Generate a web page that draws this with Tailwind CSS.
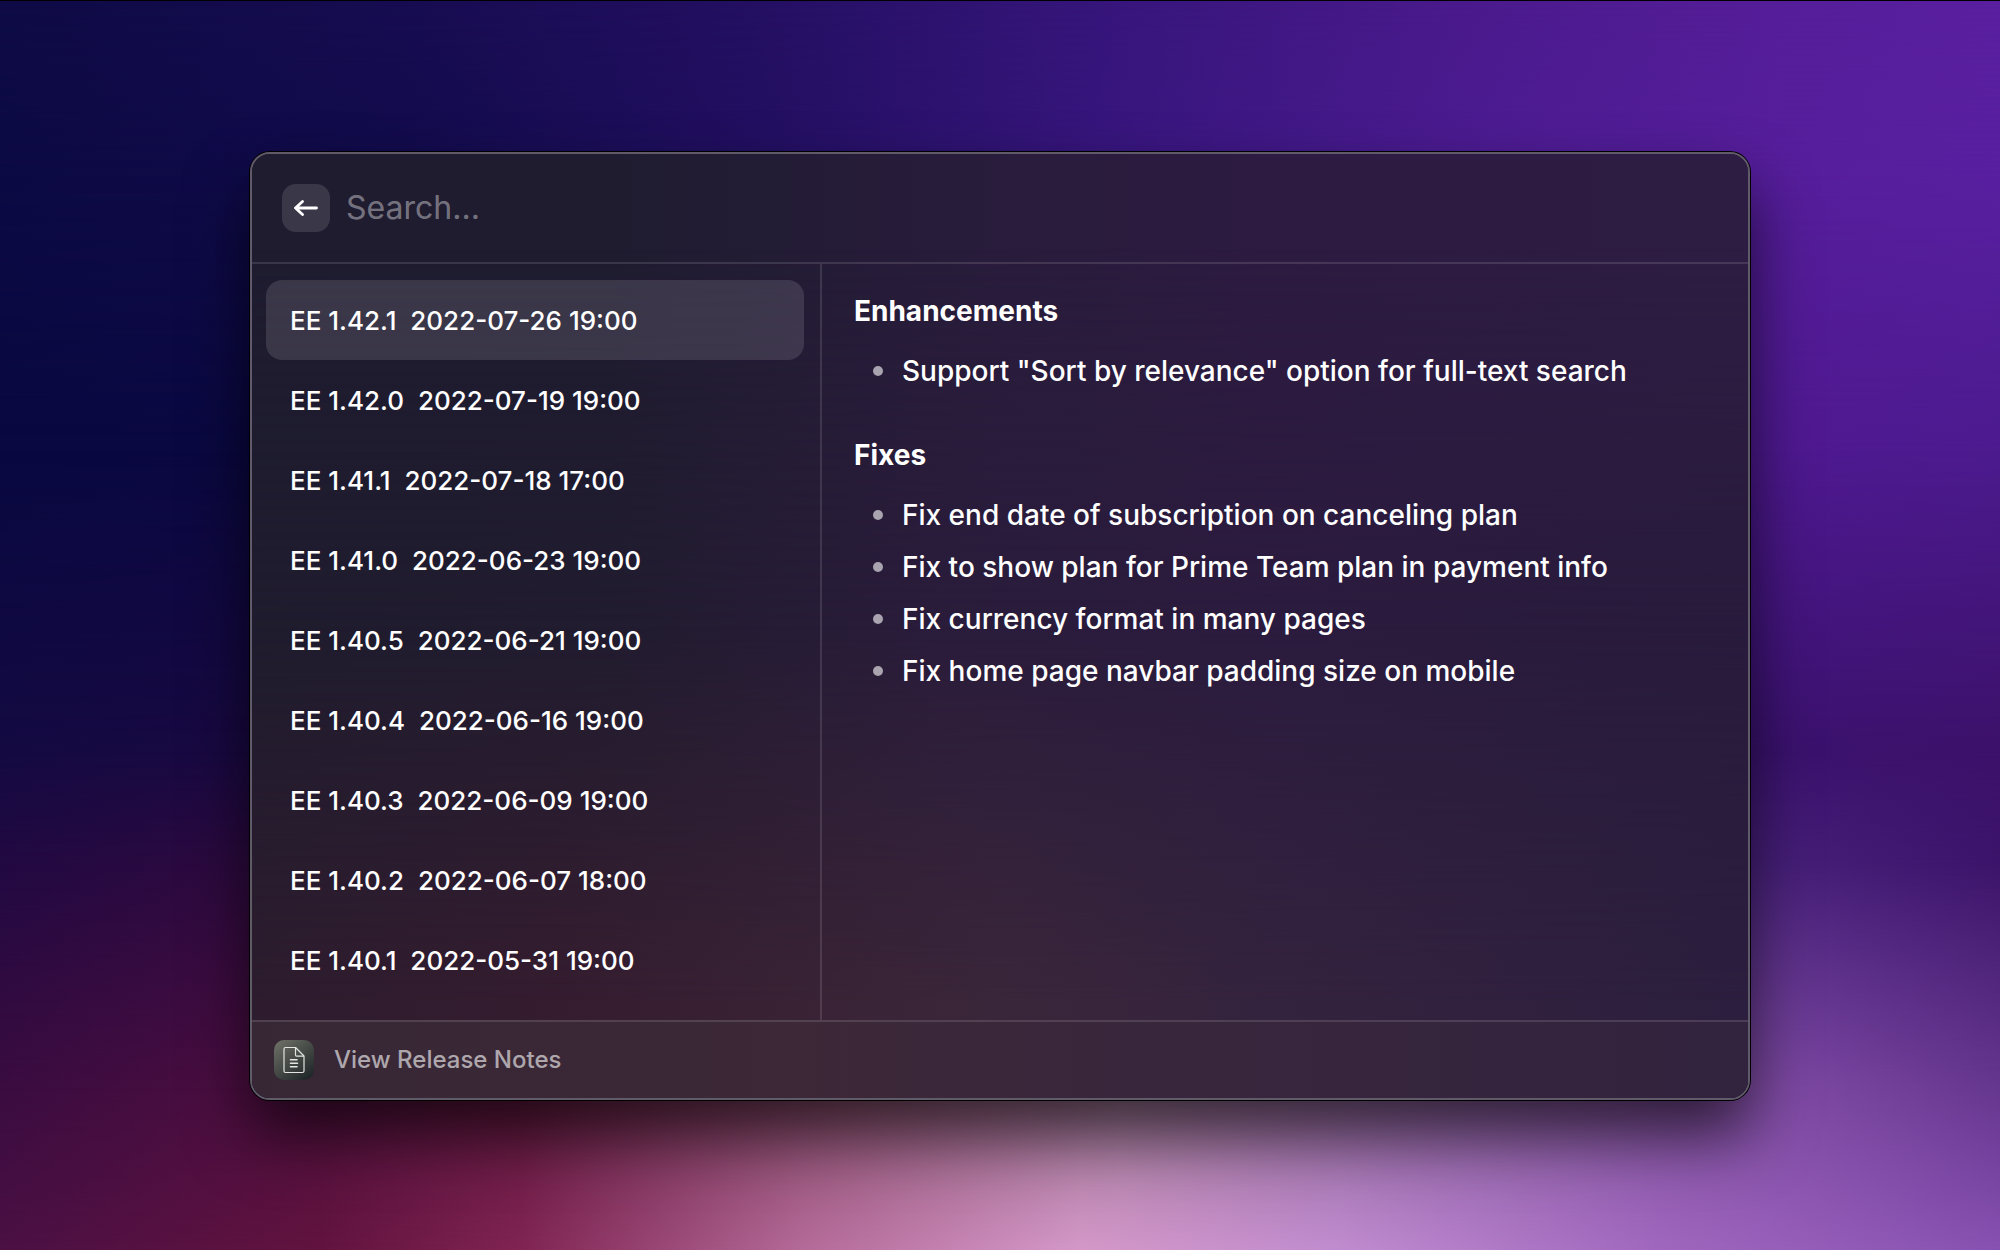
<!DOCTYPE html>
<html lang="en">
<head>
<meta charset="utf-8">
<meta name="viewport" content="width=device-width, initial-scale=1">
<title>View Release Notes</title>
<script src="https://cdn.jsdelivr.net/npm/@tailwindcss/browser@4"></script>
</head>
<body class="relative isolate flex min-h-screen items-center justify-center bg-[#0a0a40] px-[12.5%] pt-0.5 font-['Inter',sans-serif] text-white">

  <!-- Wallpaper: horizontal colour bands blended into each other from top to bottom -->
  <div class="absolute inset-0 -z-10 overflow-hidden border-t border-black" aria-hidden="true">
    <div class="absolute inset-0 bg-[linear-gradient(90deg,#0e0b46_0%,#170c51_20%,#220f60_36%,#35157a_54%,#4a1a8c_73%,#561e9a_90%,#591fa0_100%)]"></div>
    <div class="absolute inset-0 bg-[linear-gradient(90deg,#0c0a44_0%,#110b4b_20%,#220f60_38%,#38167e_56%,#4e1c94_76%,#561e9c_90%,#581fa0_100%)] mask-[linear-gradient(180deg,transparent_0%,black_14%)]"></div>
    <div class="absolute inset-0 bg-[linear-gradient(90deg,#090840_0%,#0b0842_20%,#1a0d5a_42%,#34147a_60%,#4a1b90_80%,#4f1991_90%,#4c1b8e_100%)] mask-[linear-gradient(180deg,transparent_14%,black_36%)]"></div>
    <div class="absolute inset-0 bg-[linear-gradient(90deg,#140a42_0%,#1c0842_20%,#280d56_50%,#3a1270_85%,#3c116a_100%)] mask-[linear-gradient(180deg,transparent_36%,black_60%)]"></div>
    <div class="absolute inset-0 bg-[linear-gradient(90deg,#220942_0%,#300a3e_16%,#4a143e_30%,#542660_50%,#4a2470_70%,#47207a_88%,#3c146a_100%)] mask-[linear-gradient(180deg,transparent_60%,black_69%)]"></div>
    <div class="absolute inset-0 bg-[linear-gradient(90deg,#3a0c40_0%,#4c0e40_13%,#62183f_26%,#8c5070_42%,#a07898_56%,#8c60a0_72%,#7c48a2_90%,#66378f_100%)] mask-[linear-gradient(180deg,transparent_69%,black_87%)]"></div>
    <div class="absolute inset-0 bg-[linear-gradient(90deg,#4b1044_0%,#62133e_16%,#802453_26%,#b46a98_40%,#d498c8_54%,#c08ccf_67%,#a067be_83%,#8751b1_100%)] mask-[linear-gradient(180deg,transparent_87%,black_100%)]"></div>
  </div>

  <main class="relative isolate flex min-w-0 flex-1 flex-col overflow-hidden rounded-[20px] border-2 border-[#615b69] bg-[#1f1c2f] shadow-[0_0_0_1px_#000,0_36px_64px_rgba(0,0,0,0.65)]">
    <!-- Frosted tint of the window -->
    <div class="absolute inset-0 -z-10 bg-[linear-gradient(90deg,#1f1c30_0%,#1f1c30_24%,#281c3b_48%,#2d1b41_68%,#2e1d43_100%)]"></div>
    <div class="absolute inset-0 -z-10 bg-[linear-gradient(90deg,#1f1c2e_0%,#211c2f_24%,#2a1c3b_46%,#2b1b3e_68%,#281b3c_100%)] mask-[linear-gradient(180deg,transparent_10%,black_50%)]"></div>
    <div class="absolute inset-0 -z-10 bg-[linear-gradient(90deg,#2d1c2e_0%,#351c2f_20%,#392234_36%,#3a263a_50%,#34233e_68%,#2c1e3e_100%)] mask-[linear-gradient(180deg,transparent_50%,black_90%)]"></div>

    <header class="flex h-[110px] items-center gap-4 border-b-2 border-white/12 px-[30px]">
      <button type="button" aria-label="Back" class="flex size-12 items-center justify-center rounded-[14px] bg-white/12">
        <svg class="h-6 w-6" viewBox="0 0 24 24" fill="none" stroke="currentColor" stroke-width="2.8" stroke-linecap="round" stroke-linejoin="round" aria-hidden="true"><path d="M22.500 12H1.500M8.500 5.500 1.500 12l7 6.500"/></svg>
      </button>
      <input type="text" aria-label="Search" placeholder="Search..." class="h-12 min-w-0 flex-1 bg-transparent text-[32px] text-white outline-none placeholder:text-white/40">
    </header>

    <div class="flex">
      <nav aria-label="Versions" class="w-[570px] shrink-0 border-r-2 border-white/12 pt-4 pr-4 pb-5 pl-[14px] text-[26px] font-medium">
        <a href="#" aria-current="true" class="flex h-20 items-center rounded-2xl bg-white/12 px-6 whitespace-pre">EE 1.42.1  2022-07-26 19:00</a>
        <a href="#" class="flex h-20 items-center rounded-2xl px-6 whitespace-pre">EE 1.42.0  2022-07-19 19:00</a>
        <a href="#" class="flex h-20 items-center rounded-2xl px-6 whitespace-pre">EE 1.41.1  2022-07-18 17:00</a>
        <a href="#" class="flex h-20 items-center rounded-2xl px-6 whitespace-pre">EE 1.41.0  2022-06-23 19:00</a>
        <a href="#" class="flex h-20 items-center rounded-2xl px-6 whitespace-pre">EE 1.40.5  2022-06-21 19:00</a>
        <a href="#" class="flex h-20 items-center rounded-2xl px-6 whitespace-pre">EE 1.40.4  2022-06-16 19:00</a>
        <a href="#" class="flex h-20 items-center rounded-2xl px-6 whitespace-pre">EE 1.40.3  2022-06-09 19:00</a>
        <a href="#" class="flex h-20 items-center rounded-2xl px-6 whitespace-pre">EE 1.40.2  2022-06-07 18:00</a>
        <a href="#" class="flex h-20 items-center rounded-2xl px-6 whitespace-pre">EE 1.40.1  2022-05-31 19:00</a>
      </nav>
      <article class="min-w-0 flex-1 px-8 pt-[29px] text-[28px] leading-9">
        <h2 class="font-bold">Enhancements</h2>
        <ul class="mt-6 flex flex-col gap-4 pl-[19px] font-medium">
          <li class="flex items-center gap-[19px]"><span class="size-[10px] shrink-0 rounded-full bg-white/60"></span>Support "Sort by relevance" option for full-text search</li>
        </ul>
        <h2 class="mt-12 font-bold">Fixes</h2>
        <ul class="mt-6 flex flex-col gap-4 pl-[19px] font-medium">
          <li class="flex items-center gap-[19px]"><span class="size-[10px] shrink-0 rounded-full bg-white/60"></span>Fix end date of subscription on canceling plan</li>
          <li class="flex items-center gap-[19px]"><span class="size-[10px] shrink-0 rounded-full bg-white/60"></span>Fix to show plan for Prime Team plan in payment info</li>
          <li class="flex items-center gap-[19px]"><span class="size-[10px] shrink-0 rounded-full bg-white/60"></span>Fix currency format in many pages</li>
          <li class="flex items-center gap-[19px]"><span class="size-[10px] shrink-0 rounded-full bg-white/60"></span>Fix home page navbar padding size on mobile</li>
        </ul>
      </article>
    </div>

    <footer class="flex h-[78px] items-center gap-5 border-t-2 border-white/12 bg-[linear-gradient(90deg,#372735_0%,#3c2837_36%,#38263c_60%,#32233e_100%)] px-[22px] text-2xl font-medium text-white/60">
      <svg class="size-10" viewBox="0 0 40 40" fill="none" aria-hidden="true">
        <defs>
          <linearGradient id="tile" x1="4" y1="0" x2="36" y2="40" gradientUnits="userSpaceOnUse">
            <stop stop-color="#6d6f66"/>
            <stop offset="1" stop-color="#1d2426"/>
          </linearGradient>
        </defs>
        <rect width="40" height="40" rx="10" fill="url(#tile)"/>
        <path d="M11.500 7.500H21.500L30 16V31a1.500 1.500 0 0 1-1.500 1.500H11.500A1.500 1.500 0 0 1 10 31V9a1.500 1.500 0 0 1 1.500-1.500Z" stroke="#e4e5e2" stroke-width="1.200" stroke-linejoin="round"/>
        <path d="M21.500 7.500V15A1.200 1.200 0 0 0 22.700 16.200H30" stroke="#e4e5e2" stroke-width="1.200"/>
        <path d="M16.500 19.700h6.500M16.500 23.200h7M16.500 26.700h6.500" stroke="#e4e5e2" stroke-width="1.600" stroke-linecap="round"/>
      </svg>
      <span>View Release Notes</span>
    </footer>
  </main>
</body>
</html>
